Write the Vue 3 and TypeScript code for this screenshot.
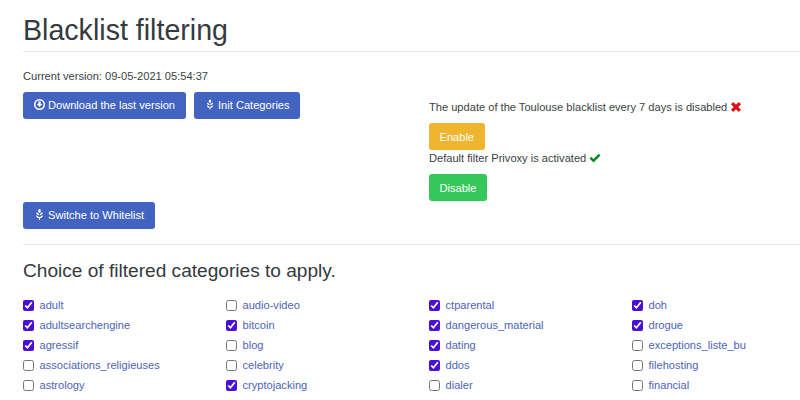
<script setup lang="ts">
const columns: { name: string; on: boolean }[][] = [
  [
    { name: 'adult', on: true },
    { name: 'adultsearchengine', on: true },
    { name: 'agressif', on: true },
    { name: 'associations_religieuses', on: false },
    { name: 'astrology', on: false },
  ],
  [
    { name: 'audio-video', on: false },
    { name: 'bitcoin', on: true },
    { name: 'blog', on: false },
    { name: 'celebrity', on: false },
    { name: 'cryptojacking', on: true },
  ],
  [
    { name: 'ctparental', on: true },
    { name: 'dangerous_material', on: true },
    { name: 'dating', on: true },
    { name: 'ddos', on: true },
    { name: 'dialer', on: false },
  ],
  [
    { name: 'doh', on: true },
    { name: 'drogue', on: true },
    { name: 'exceptions_liste_bu', on: false },
    { name: 'filehosting', on: false },
    { name: 'financial', on: false },
  ],
]
</script>

<template>
  <div class="page">
    <h1 class="title">Blacklist filtering</h1>
    <hr class="rule" />
    <div class="top">
      <div class="left">
        <p class="version">Current version: 09-05-2021 05:54:37</p>
        <div class="btn-row">
          <button class="btn btn-blue">
            <svg class="ico" viewBox="0 0 16 16"><circle cx="8" cy="8" r="8" fill="#fff" /><circle cx="8" cy="8" r="5.800" fill="#4264c0" /><path d="M6.300 3.600h3.400v3.800h2.300L8 11.800 4 7.400h2.300z" fill="#fff" /></svg>
            Download the last version
          </button>
          <button class="btn btn-blue btn-init">
            <svg class="ico" viewBox="0 0 16 16"><g fill="#fff"><ellipse cx="8" cy="2.800" rx="1.900" ry="2.800" /><path d="M3 5.200c2.400.2 4.400 1.300 4.500 3.800C5 8.800 3.100 7.600 3 5.200zM13 5.200c-2.400.2-4.400 1.300-4.500 3.800C11 8.800 12.900 7.600 13 5.200zM3 9.400c2.400.2 4.400 1.300 4.500 3.800C5 13 3.100 11.800 3 9.400zM13 9.400c-2.400.2-4.400 1.300-4.500 3.800 2.500-.2 4.400-1.400 4.500-3.800z" /><rect x="7.200" y="12" width="1.600" height="3.800" /></g></svg>
            Init Categories
          </button>
        </div>
        <button class="btn btn-blue btn-switch">
          <svg class="ico" viewBox="0 0 16 16"><g fill="#fff"><ellipse cx="8" cy="2.800" rx="1.900" ry="2.800" /><path d="M3 5.200c2.400.2 4.400 1.300 4.500 3.800C5 8.800 3.100 7.600 3 5.200zM13 5.200c-2.400.2-4.400 1.300-4.500 3.800C11 8.800 12.900 7.600 13 5.200zM3 9.400c2.400.2 4.400 1.300 4.500 3.800C5 13 3.100 11.800 3 9.400zM13 9.400c-2.400.2-4.400 1.300-4.500 3.800 2.500-.2 4.400-1.400 4.500-3.800z" /><rect x="7.200" y="12" width="1.600" height="3.800" /></g></svg>
          Switche to Whitelist
        </button>
      </div>
      <div class="right">
        <p class="status">
          The update of the Toulouse blacklist every 7 days is disabled
          <svg class="mark" viewBox="0 0 12 12"><path d="M1 3.200 3.200 1 6 3.800 8.800 1 11 3.200 8.200 6 11 8.800 8.800 11 6 8.200 3.200 11 1 8.800 3.800 6z" fill="#e00f0f" /></svg>
        </p>
        <button class="btn btn-yellow">Enable</button>
        <p class="status status-tight">
          Default filter Privoxy is activated
          <svg class="mark" viewBox="0 0 12 12"><path d="M.5 6.500 2.300 4.700 4.500 6.900 9.700 1.700 11.500 3.500 4.500 10.500z" fill="#0a8a1e" /></svg>
        </p>
        <button class="btn btn-green">Disable</button>
      </div>
    </div>
    <hr class="rule rule-mid" />
    <h2 class="subtitle">Choice of filtered categories to apply.</h2>
    <div class="cats">
      <div v-for="(col, i) in columns" :key="i" class="col">
        <label v-for="cat in col" :key="cat.name" class="cat">
          <input type="checkbox" :checked="cat.on" />
          <span>{{ cat.name }}</span>
        </label>
      </div>
    </div>
  </div>
</template>

<style scoped>
.page {
  height: 400px;
  overflow: hidden;
  padding-left: 23px;
  font-family: "Liberation Sans", Arial, sans-serif;
  font-size: 11.100px;
  color: #3a3f44;
  background: #fff;
}

.title {
  margin: 0;
  padding-top: 12px;
  font-size: 28.600px;
  font-weight: 400;
  line-height: 36px;
  color: #343a40;
}

.rule {
  margin: 3px 0 0;
  border: none;
  border-top: 1px solid #e9ecef;
}

.rule-mid {
  margin-top: 15px;
}

.top {
  display: flex;
  height: 177px;
}

.left {
  width: 406px;
}

.version {
  margin: 17px 0 0;
  line-height: 14px;
}

.btn-row {
  display: flex;
  gap: 8px;
  margin-top: 9px;
}

.btn {
  height: 27px;
  padding: 0 10px;
  border: 1px solid transparent;
  border-radius: 3px;
  font-family: inherit;
  font-size: 11.100px;
  color: #fff;
  display: inline-flex;
  align-items: center;
  gap: 3px;
}

.btn-blue {
  padding-bottom: 2px;
  background: #4264c0;
}

.btn-init {
  padding-right: 9px;
}

.btn-init .ico {
  width: 10px;
}

.btn-yellow {
  padding: 0 9.500px;
  background: #efb52f;
}

.btn-green {
  padding: 0 9.500px;
  background: #34c759;
}

.btn-switch {
  margin-top: 83px;
}

.ico {
  width: 11px;
  height: 11px;
}

.right {
  padding-top: 48px;
  display: flex;
  flex-direction: column;
  align-items: flex-start;
}

.status {
  margin: 0 0 9px;
  line-height: 14px;
  color: #3a3f44;
}

.status-tight {
  margin: 1px 0 9px;
}

.mark {
  width: 12px;
  height: 12px;
  vertical-align: -2px;
}

.subtitle {
  margin: 15px 0 0;
  font-size: 19.100px;
  font-weight: 400;
  line-height: 22px;
  color: #343a40;
}

.cats {
  display: flex;
  margin-top: 13px;
}

.col {
  width: 203px;
  flex: none;
}

.cat {
  display: flex;
  align-items: center;
  height: 20px;
  gap: 5.500px;
  color: #4d63b8;
}

.cat input {
  margin: 0;
  width: 11px;
  height: 11px;
  accent-color: #4a0fd6;
}
</style>

<style>
html,
body {
  margin: 0;
  overflow: hidden;
}
</style>
